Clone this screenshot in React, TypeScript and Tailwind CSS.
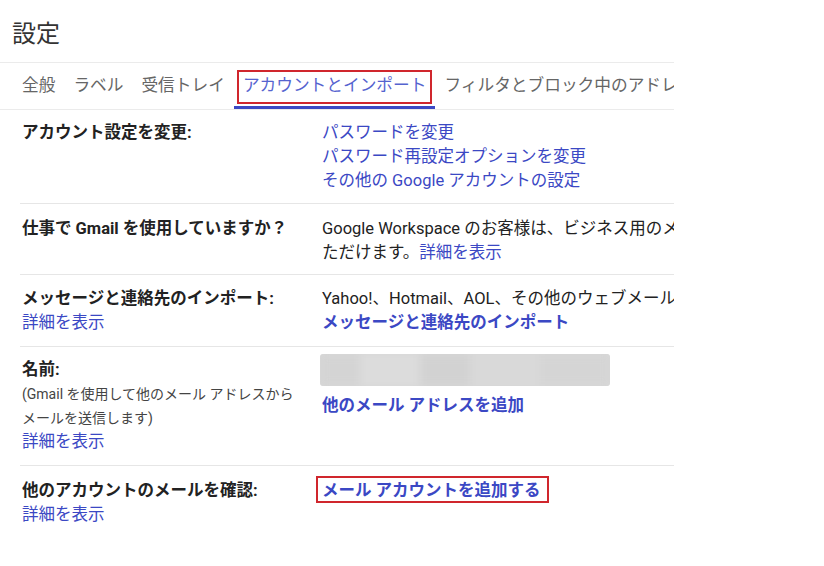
import React from "react";

const link = "text-[#3b48c4]";

function Row({
  label,
  children,
  last,
  className = "",
}: {
  label: React.ReactNode;
  children: React.ReactNode;
  last?: boolean;
  className?: string;
}) {
  return (
    <div
      className={`grid grid-cols-[302px_1fr] leading-6 ${
        last ? "" : "border-b border-[#e6e6e6]"
      } ${className}`}
    >
      <div className="pl-[2px] text-[#222]">{label}</div>
      <div className="whitespace-nowrap text-[#222]">{children}</div>
    </div>
  );
}

export default function App() {
  const tabs = ["全般", "ラベル", "受信トレイ", "アカウントとインポート", "フィルタとブロック中のアドレス"];
  return (
    <div
      className="w-[824px] h-[566px] bg-white overflow-hidden text-[16.5px]"
      style={{ fontFamily: 'Roboto, "Noto Sans CJK JP", sans-serif' }}
    >
      <div className="w-[674px] overflow-hidden">
        <div className="h-[62px] flex items-center pt-[5px] pl-[12px] text-[24px] text-[#333]">
          設定
        </div>
        <div className="flex h-[48px] border-y border-[#ebebeb] pl-[13px] whitespace-nowrap text-[16.7px]">
          {tabs.map((t, i) => (
            <div
              key={t}
              className={`relative flex items-center px-[9px] ${
                i === 3 ? "text-[#5563cf]" : "text-[#666]"
              }`}
            >
              {t}
              {i === 3 && (
                <>
                  <span className="absolute left-[3px] right-[3px] top-[7px] bottom-[5px] border-2 border-[#d0262d]" />
                  <span className="absolute left-0 right-0 bottom-0 h-[3px] bg-[#3b48c4]" />
                </>
              )}
            </div>
          ))}
        </div>
        <div className="pl-[20px]">
          <Row label={<span className="font-bold">アカウント設定を変更:</span>} className="pt-[11px] pb-[10px]">
            <div className={link}>パスワードを変更</div>
            <div className={link}>パスワード再設定オプションを変更</div>
            <div className={link}>その他の Google アカウントの設定</div>
          </Row>
          <Row label={<span className="font-bold">仕事で Gmail を使用していますか？</span>} className="pt-[13px] pb-[9px]">
            <div>Google Workspace のお客様は、ビジネス用のメール アドレス（you@yourcompany）をご利用い</div>
            <div>
              ただけます。<span className={link}>詳細を表示</span>
            </div>
          </Row>
          <Row
            className="pt-[12px] pb-[11px]"
            label={
              <>
                <div className="font-bold">メッセージと連絡先のインポート:</div>
                <div className={link}>詳細を表示</div>
              </>
            }
          >
            <div>Yahoo!、Hotmail、AOL、その他のウェブメールや POP3 アカウントからインポートします。</div>
            <div className={`${link} font-bold`}>メッセージと連絡先のインポート</div>
          </Row>
          <Row
            className="pt-[11px] pb-[11px]"
            label={
              <>
                <div className="font-bold">名前:</div>
                <div className="text-[14px] text-[#444]">(Gmail を使用して他のメール アドレスから</div>
                <div className="text-[14px] text-[#444]">メールを送信します)</div>
                <div className={link}>詳細を表示</div>
              </>
            }
          >
            <div className="mt-[-4px] ml-[-2px] w-[290px] h-[32px] rounded-[3px] overflow-hidden flex bg-[#d8d8d8]">
              <div className="flex w-full blur-[4px]">
                <div className="w-[40px] bg-[#d4d4d4]" />
                <div className="w-[60px] bg-[#dcdcdc]" />
                <div className="w-[50px] bg-[#d2d2d2]" />
                <div className="w-[70px] bg-[#d9d9d9]" />
                <div className="w-[70px] bg-[#d5d5d5]" />
              </div>
            </div>
            <div className={`${link} font-bold mt-[8px]`}>他のメール アドレスを追加</div>
          </Row>
          <Row
            last
            className="pt-[13px] pb-[11px]"
            label={
              <>
                <div className="font-bold">他のアカウントのメールを確認:</div>
                <div className={link}>詳細を表示</div>
              </>
            }
          >
            <span className={`relative ${link} font-bold`}>
              メール アカウントを追加する
              <span className="absolute left-[-6px] right-[-8px] top-[-5px] bottom-[-3px] border-2 border-[#d0262d]" />
            </span>
          </Row>
        </div>
      </div>
    </div>
  );
}
